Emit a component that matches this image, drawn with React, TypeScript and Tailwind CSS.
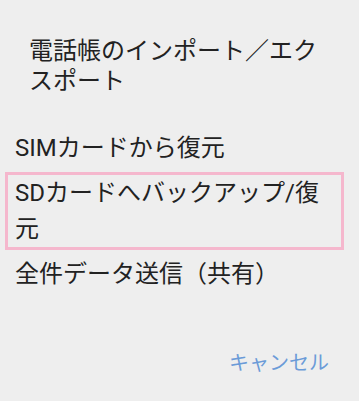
import React from 'react';

const items = [
  { label: 'SIMカードから復元', focused: false },
  { label: 'SDカードへバックアップ/復元', focused: true },
  { label: '全件データ送信（共有）', focused: false },
];

export default function App() {
  return (
    <div
      className="h-[401px] w-full overflow-hidden bg-[#eeeeee] text-[#222222]"
      style={{ fontFamily: 'Roboto, "Noto Sans CJK JP", sans-serif' }}
    >
      <h2 className="pl-[29px] pr-[30px] pt-[36px] text-[24px] font-normal leading-[30px]">
        電話帳のインポート／エクスポート
      </h2>

      <ul className="ml-[5px] mr-[15px] mt-[31px] flex flex-col gap-[3px]">
        {items.map((item) => (
          <li
            key={item.label}
            className={`border-[3px] pl-[7px] pr-[2px] text-[24px] leading-[36px] ${
              item.focused ? 'border-[#f5b7cd]' : 'border-transparent'
            }`}
          >
            {item.label}
          </li>
        ))}
      </ul>

      <div className="mt-[54px] flex justify-end pr-[30px]">
        <button className="text-[20px] leading-[28px] text-[#6b9bd8]">キャンセル</button>
      </div>
    </div>
  );
}
